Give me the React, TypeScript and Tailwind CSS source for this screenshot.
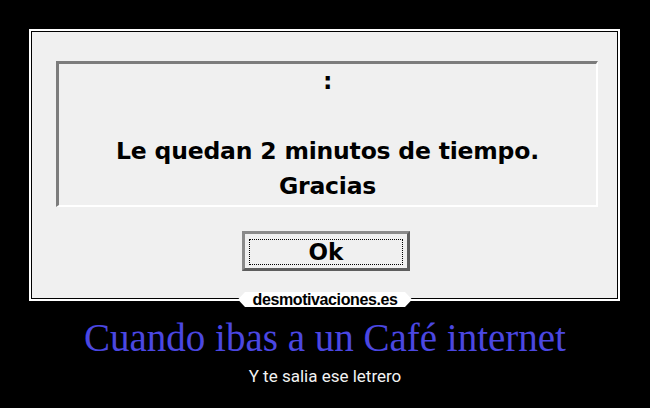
export default function App() {
  return (
    <div className="w-[650px] h-[408px] bg-black overflow-hidden flex flex-col">
      <div className="relative mt-[29px] ml-[29px] w-[591px] h-[272px] border-2 border-white bg-black p-px">
        <div className="h-full bg-[#f0f0f0] pt-[29px]">
          <div className="ml-[24px] w-[542px] h-[146px] border-t-[3px] border-l-[3px] border-b-2 border-r-2 border-t-[#7c7c7c] border-l-[#7c7c7c] border-b-white border-r-white text-center font-['DejaVu_Sans',sans-serif] font-bold text-[23.5px] leading-[35px] tracking-[-0.2px] text-black">
            <div>:</div>
            <div>&nbsp;</div>
            <div>Le quedan 2 minutos de tiempo.</div>
            <div>Gracias</div>
          </div>
          <div className="mt-[24px] ml-[210px] w-[168px] h-[40px] border-[3px] border-t-[#8a8a8a] border-l-[#8a8a8a] border-b-[#5e5e5e] border-r-[#5e5e5e] bg-[#f0f0f0] px-[4px] pt-[5px] pb-[3px]">
            <div className="h-full border border-dotted border-black flex items-center justify-center font-['DejaVu_Sans',sans-serif] font-bold text-[23px] leading-none text-black">
              Ok
            </div>
          </div>
        </div>
        <div className="absolute left-[207px] top-[261px] w-[174px] h-[15px] bg-white [clip-path:polygon(0_50%,7px_0,calc(100%-7px)_0,100%_50%,calc(100%-7px)_100%,7px_100%)] flex items-center justify-center">
          <span className="font-['Liberation_Sans',sans-serif] font-bold text-[16px] leading-none tracking-[-0.4px] text-black">
            desmotivaciones.es
          </span>
        </div>
      </div>
      <div className="mt-[17px] text-center font-['Liberation_Serif',serif] text-[39px] leading-none text-[#4b47e2]">
        Cuando ibas a un Café internet
      </div>
      <div className="mt-[11px] text-center font-['Roboto',sans-serif] text-[17px] leading-none text-[#f2f2f2]">
        Y te salia ese letrero
      </div>
    </div>
  );
}
